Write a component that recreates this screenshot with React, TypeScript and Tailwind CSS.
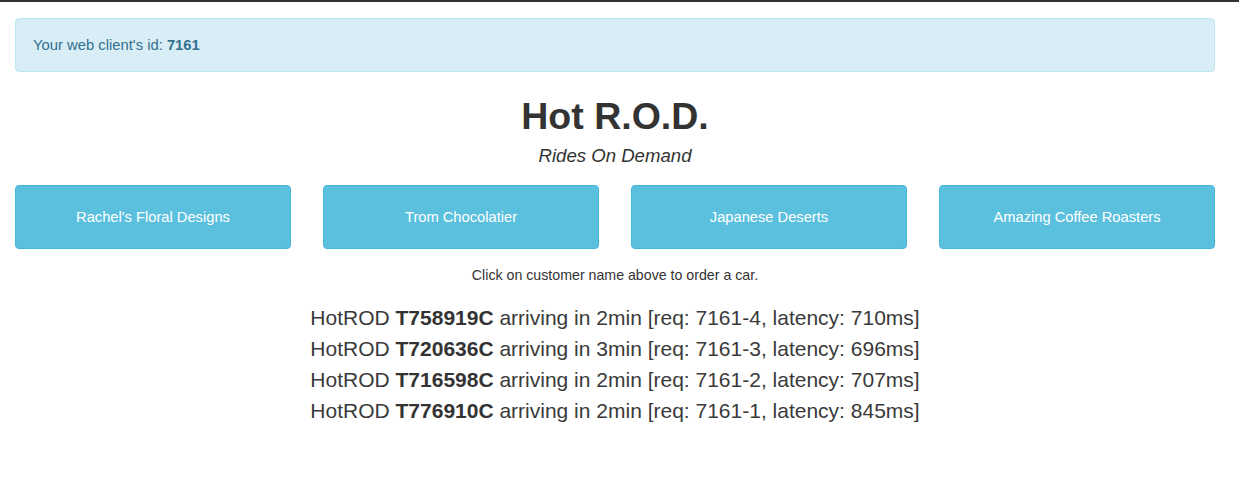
import React from "react";

const CUSTOMERS = [
  "Rachel's Floral Designs",
  "Trom Chocolatier",
  "Japanese Deserts",
  "Amazing Coffee Roasters",
];

interface Ride {
  driver: string;
  eta: number;
  req: string;
  latency: number;
}

const RIDES: Ride[] = [
  { driver: "T758919C", eta: 2, req: "7161-4", latency: 710 },
  { driver: "T720636C", eta: 3, req: "7161-3", latency: 696 },
  { driver: "T716598C", eta: 2, req: "7161-2", latency: 707 },
  { driver: "T776910C", eta: 2, req: "7161-1", latency: 845 },
];

const App: React.FC = () => {
  return (
    <div
      className="min-h-[491px] bg-white border-t-2 border-[#333] text-[#333]"
      style={{ fontFamily: '"Liberation Sans", Arial, sans-serif' }}
    >
      <div className="w-[1230px] px-[15px]">
        {/* client id alert */}
        <div className="mt-[16px] h-[54px] flex items-center px-[17px] rounded-[4px] border border-[#bce8f1] bg-[#d9edf7] text-[#31708f] text-[14.8px]">
          Your web client's id:&nbsp;<b>7161</b>
        </div>

        {/* header */}
        <div className="text-center">
          <h1 className="mt-[22px] text-[37.5px] leading-[44px] font-bold">Hot R.O.D.</h1>
          <p className="mt-[7px] text-[18.6px] leading-[22px] italic">Rides On Demand</p>
        </div>

        {/* customer buttons */}
        <div className="mt-[18px] grid grid-cols-4 gap-[32px]">
          {CUSTOMERS.map((c) => (
            <button
              key={c}
              className="h-[64px] rounded-[4px] border border-[#46b8da] bg-[#5bc0de] text-white text-[14.7px]"
            >
              {c}
            </button>
          ))}
        </div>

        <p className="mt-[16px] text-center text-[14.2px] leading-[20px]">
          Click on customer name above to order a car.
        </p>

        {/* rides */}
        <div className="mt-[17px] text-center text-[21px] leading-[31px] text-[#3a3a3a]">
          {RIDES.map((r) => (
            <div key={r.req}>
              HotROD <b className="font-bold text-[#333]">{r.driver}</b> arriving in {r.eta}min [req: {r.req}, latency: {r.latency}ms]
            </div>
          ))}
        </div>
      </div>
    </div>
  );
};

export default App;
